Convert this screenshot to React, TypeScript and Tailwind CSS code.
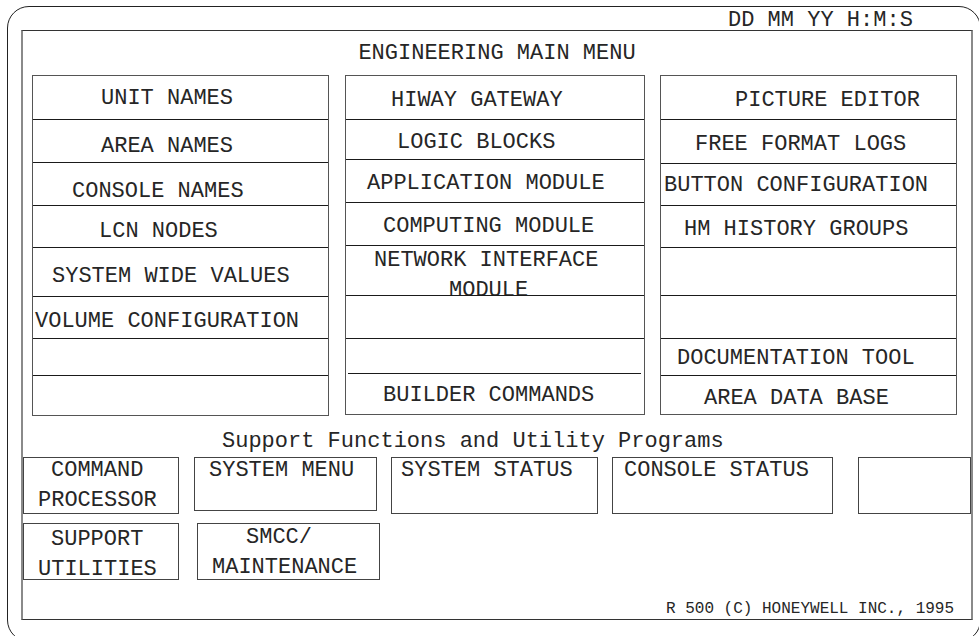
import React from 'react';

type Row = { lines: string[]; cls: string; last?: boolean };

// heights follow the ruled lines of the panel; padding places the label like the original screen
const unitCol: Row[] = [
  { lines: ['UNIT NAMES'], cls: 'h-[44px] pt-[12px] pl-[68px]' },
  { lines: ['AREA NAMES'], cls: 'h-[43px] pt-[16px] pl-[68px]' },
  { lines: ['CONSOLE NAMES'], cls: 'h-[43px] pt-[18px] pl-[39px]' },
  { lines: ['LCN NODES'], cls: 'h-[42px] pt-[15px] pl-[66px]' },
  { lines: ['SYSTEM WIDE VALUES'], cls: 'h-[49px] pt-[18px] pl-[19px]' },
  { lines: ['VOLUME CONFIGURATION'], cls: 'h-[42px] pt-[14px] pl-[2px]' },
  { lines: [], cls: 'h-[37px]' },
  { lines: [], cls: 'h-[39px]', last: true },
];

const pictureCol: Row[] = [
  { lines: ['PICTURE EDITOR'], cls: 'h-[44px] pt-[14px] pl-[74px]' },
  { lines: ['FREE FORMAT LOGS'], cls: 'h-[44px] pt-[14px] pl-[34px]' },
  { lines: ['BUTTON CONFIGURATION'], cls: 'h-[42px] pt-[11px] pl-[3px]' },
  { lines: ['HM HISTORY GROUPS'], cls: 'h-[42px] pt-[13px] pl-[23px]' },
  { lines: [], cls: 'h-[48px]' },
  { lines: [], cls: 'h-[43px]' },
  { lines: ['DOCUMENTATION TOOL'], cls: 'h-[37px] pt-[9px] pl-[16px]' },
  { lines: ['AREA DATA BASE'], cls: 'h-[38px] pt-[12px] pl-[43px]', last: true },
];

const MenuColumn = ({ rows, width }: { rows: Row[]; width: string }) => (
  <div className={`${width} border border-[#555] bg-white`}>
    {rows.map((r, i) => (
      <div key={i} className={`${r.last ? '' : 'border-b border-[#1a1a1a]'} ${r.cls} whitespace-nowrap`}>
        {r.lines.map((l) => (
          <div key={l}>{l}</div>
        ))}
      </div>
    ))}
  </div>
);

const Box = ({ className, children }: { className: string; children?: React.ReactNode }) => (
  <div className={`border border-[#444] whitespace-nowrap ${className}`}>{children}</div>
);

export default function App() {
  return (
    <div className="w-[979px] h-[636px] overflow-hidden bg-white text-[#262626] font-['Liberation_Mono','Courier_New',monospace] text-[22px] leading-[22px]">
      {/* outer rounded frame, its right and bottom edges fall just outside the window */}
      <div className="ml-[7px] mt-[6px] w-[974px] h-[636px] rounded-[22px] border border-[#222]">
        <div className="h-[23px] pt-[3px] pl-[720px] whitespace-nowrap">DD MM YY H:M:S</div>

        <div className="ml-[13px] w-[952px] h-[590px] border-y border-x-2 border-t-[#333] border-b-[#333] border-x-[#8a8a8a]">
          <div className="h-[44px] pt-[12px] text-center">ENGINEERING MAIN MENU</div>

          <div className="flex items-start pl-[9px]">
            <MenuColumn rows={unitCol} width="w-[297px]" />

            <div className="ml-[16px] w-[300px] border border-[#555] bg-white whitespace-nowrap">
              <div className="h-[44px] pt-[14px] pl-[45px] border-b border-[#1a1a1a]">HIWAY GATEWAY</div>
              <div className="h-[40px] pt-[12px] pl-[51px] border-b border-[#1a1a1a]">LOGIC BLOCKS</div>
              <div className="h-[43px] pt-[13px] pl-[21px] border-b border-[#1a1a1a]">APPLICATION MODULE</div>
              <div className="h-[43px] pt-[13px] pl-[37px] border-b border-[#1a1a1a]">COMPUTING MODULE</div>
              <div className="h-[50px] overflow-hidden border-b border-[#1a1a1a]">
                <div className="pt-[4px] pl-[28px]">NETWORK INTERFACE</div>
                <div className="mt-[8px] pl-[103px]">MODULE</div>
              </div>
              <div className="h-[43px] border-b border-[#1a1a1a]" />
              <div className="h-[35px] ml-[2px] mr-[3px] border-b border-[#1a1a1a]" />
              <div className="h-[40px] pt-[11px] pl-[37px]">BUILDER COMMANDS</div>
            </div>

            <div className="ml-[15px]">
              <MenuColumn rows={pictureCol} width="w-[297px]" />
            </div>
          </div>

          <div className="mt-[15px] pl-[199px] whitespace-nowrap">Support Functions and Utility Programs</div>

          <div className="mt-[4px] flex items-start">
            <Box className="w-[156px] h-[57px] pt-[2px]">
              <div className="pl-[27px]">COMMAND</div>
              <div className="pl-[14px] mt-[8px]">PROCESSOR</div>
            </Box>
            <Box className="ml-[15px] w-[183px] h-[54px] pt-[2px] pl-[14px]">SYSTEM MENU</Box>
            <Box className="ml-[14px] w-[207px] h-[57px] pt-[2px] pl-[9px]">SYSTEM STATUS</Box>
            <Box className="ml-[14px] w-[221px] h-[57px] pt-[2px] pl-[11px]">CONSOLE STATUS</Box>
            <Box className="ml-[25px] w-[113px] h-[57px]" />
          </div>

          <div className="mt-[9px] flex items-start">
            <Box className="w-[156px] h-[57px] pt-[5px]">
              <div className="pl-[27px]">SUPPORT</div>
              <div className="pl-[14px] mt-[8px]">UTILITIES</div>
            </Box>
            <Box className="ml-[18px] w-[183px] h-[57px] pt-[3px]">
              <div className="pl-[48px]">SMCC/</div>
              <div className="pl-[14px] mt-[8px]">MAINTENANCE</div>
            </Box>
          </div>

          <div className="mt-[21px] pl-[643px] text-[16px] leading-[16px] whitespace-nowrap">
            R 500 (C) HONEYWELL INC., 1995
          </div>
        </div>
      </div>
    </div>
  );
}
